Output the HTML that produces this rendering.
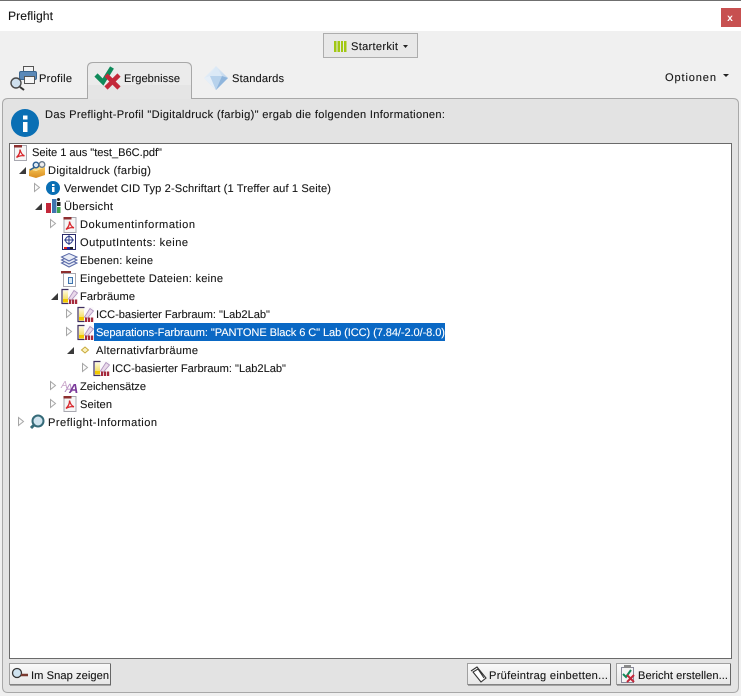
<!DOCTYPE html>
<html><head><meta charset="utf-8"><title>Preflight</title>
<style>
html,body{margin:0;padding:0;background:#f0f0f0;width:741px;height:696px;overflow:hidden}
svg{display:block}
text{font-family:"Liberation Sans",sans-serif;font-size:11.1px;fill:#161616;stroke:#161616;stroke-width:.1;text-rendering:geometricPrecision}
</style></head><body>
<svg width="741" height="696" viewBox="0 0 741 696" xmlns="http://www.w3.org/2000/svg">
<defs>
<linearGradient id="btn" x1="0" y1="0" x2="0" y2="1"><stop offset="0" stop-color="#fafafa"/><stop offset="1" stop-color="#e6e6e6"/></linearGradient>
<linearGradient id="dia" x1="0" y1="0" x2="1" y2="1"><stop offset="0" stop-color="#f4f8fc"/><stop offset="1" stop-color="#a9c7e6"/></linearGradient>
<linearGradient id="sw" x1="0" y1="0" x2="0" y2="1"><stop offset="0" stop-color="#fdf8dc"/><stop offset="1" stop-color="#f5e06a"/></linearGradient>
<linearGradient id="box" x1="0" y1="0" x2="0" y2="1"><stop offset="0" stop-color="#f7c85a"/><stop offset="1" stop-color="#d98c1e"/></linearGradient>
<g id="pdf"><path d="M1.500 .5H13.500V15.500H1.500Z" fill="#f6f6f6" stroke="#a8a8b0"/><rect x="1" y="0" width="8" height="2.500" fill="#8e2f2f"/><path d="M3.500 12.500C6 10 7.200 7 7 4.500C7.700 7.500 9 10 11.500 10.800C8.800 10.300 5.800 11 3.500 12.500Z" fill="none" stroke="#d8262c" stroke-width="1.300"/></g>
<g id="farb"><rect x="1" y="1" width="16" height="15" fill="#fbf9fb"/><path d="M1.500 16V1.500H8" fill="none" stroke="#3f2f60" stroke-width="1.200"/><path d="M1 15.500H8" stroke="#3f2f60" stroke-width="1.200"/><rect x="2.500" y="2.500" width="5" height="8.500" fill="url(#sw)"/><rect x="2.500" y="11" width="5" height="3.500" fill="#f2c800"/><path d="M8 11L13.500 2.500L17 5L10.500 12.500Z" fill="#ead9ea" stroke="#b096c0" stroke-width=".9"/><rect x="8.500" y="11.500" width="2.200" height="4.500" fill="#a52a3c"/><rect x="11.500" y="11.500" width="2.200" height="4.500" fill="#a52a3c"/><rect x="14.500" y="11.500" width="2.200" height="4.500" fill="#a52a3c"/></g>
<path id="tri" d="M.5 .5L5.500 4.500L.5 8.500Z" fill="#fafafa" stroke="#a6a6a6"/>
<path id="open" d="M7 0V7H0Z" fill="#3a3a3a"/>
</defs>

<!-- title bar -->
<rect x="0" y="0" width="741" height="31" fill="#fff"/>
<rect x="0" y="0" width="741" height="1" fill="#6f6f6f"/>
<text x="8" y="20" style="font-size:12.2px" textLength="45">Preflight</text>
<rect x="721" y="8" width="20" height="19" fill="#c75050"/>
<text x="727" y="21" style="font-size:10px;font-weight:bold;fill:#fff;stroke:none;font-family:'Liberation Mono',monospace">x</text>

<!-- Starterkit -->
<rect x="323.500" y="33.500" width="94" height="24" fill="#e8e8e8" stroke="#adadad"/>
<g fill="#a2c814"><rect x="334" y="41" width="2.500" height="11"/><rect x="337.500" y="41" width="2.500" height="11"/><rect x="341" y="41" width="2" height="11"/><rect x="344" y="41" width="2.500" height="11"/></g>
<text x="351" y="50" textLength="47">Starterkit</text>
<path d="M403 45H408L405.500 48Z" fill="#222"/>

<!-- panel -->
<path d="M2.500 104Q2.500 98.500 8 98.500H87.500V68Q87.500 62.500 93 62.500H186Q191.500 62.500 191.500 68V98.500H733Q738.500 98.500 738.500 104V687Q738.500 692.500 733 692.500H8Q2.500 692.500 2.500 687Z" fill="#e3e3e3" stroke="#a8a8a8"/>
<path d="M88 68Q89 63 94 63H185Q190 63 191 68V85H88Z" fill="#ebebeb"/>
<rect x="88" y="85" width="103" height="14" fill="#e5e5e5"/>

<!-- tab: Profile -->
<g>
<rect x="23.500" y="66.500" width="10" height="6" fill="#f4f4f4" stroke="#555"/>
<rect x="19.500" y="71.500" width="17" height="8" rx="1.500" fill="#5b89b8" stroke="#3a6690"/>
<rect x="24.500" y="76.500" width="10" height="7" fill="#f6f6f6" stroke="#555"/>
<circle cx="16" cy="83" r="5" fill="#cfe0ee" stroke="#4a4a4a" stroke-width="1.400"/>
<path d="M20 87L24 90" stroke="#333" stroke-width="2"/>
</g>
<text x="39" y="82" textLength="33">Profile</text>

<!-- tab: Ergebnisse -->
<path d="M96 75L103 82L112 67.500" fill="none" stroke="#0f8a5a" stroke-width="4.500"/>
<path d="M106 75L119 88M119 75L106 88" fill="none" stroke="#c3283a" stroke-width="4.500"/>
<text x="124" y="82" textLength="56">Ergebnisse</text>

<!-- tab: Standards -->
<path d="M216 66L228 78L216 90L204 78Z" fill="url(#dia)"/>
<path d="M216 66L210 76H222Z" fill="#dbe9f6"/>
<path d="M204 78L210 76L216 90Z" fill="#e6eff8"/>
<path d="M210 76H222L216 90Z" fill="#b7d2ec"/>
<path d="M228 78L222 76L216 90Z" fill="#8fb5dc"/>
<text x="232" y="82" textLength="52">Standards</text>

<text x="665" y="81" textLength="51">Optionen</text>
<path d="M723 74H729L726 77Z" fill="#222"/>

<!-- info line -->
<circle cx="25" cy="123" r="14" fill="#0a6fb4"/>
<rect x="23" y="115.500" width="4.500" height="4" fill="#fff"/>
<rect x="23" y="122" width="4.500" height="10" fill="#fff"/>
<text x="45" y="118" textLength="400">Das Preflight-Profil "Digitaldruck (farbig)" ergab die folgenden Informationen:</text>

<!-- tree -->
<rect x="9.500" y="143.500" width="722" height="515" fill="#fff" stroke="#6a6a6a"/>
<rect x="94" y="323" width="351" height="18" fill="#0a68c4"/>

<use href="#pdf" x="13" y="145"/>
<text x="32" y="156" textLength="130">Seite 1 aus "test_B6C.pdf"</text>

<use href="#open" x="19" y="167"/>
<path d="M29 169L36 171L45 167V175L36 178L29 176Z" fill="url(#box)"/><path d="M29 169L38 166L45 167L36 171Z" fill="#f9dc8a"/>
<circle cx="36" cy="165" r="2.800" fill="#dbe8f3" stroke="#2a5f92" stroke-width="1.400"/><circle cx="42" cy="164.500" r="2.800" fill="#eee" stroke="#6a7a8a" stroke-width="1.300"/><path d="M30 170L35 167" stroke="#2a5f92" stroke-width="1.600"/>
<text x="48" y="174" textLength="103">Digitaldruck (farbig)</text>

<use href="#tri" x="34" y="183"/>
<circle cx="53" cy="188" r="7" fill="#0a6fb4"/><rect x="52" y="184" width="2.500" height="2" fill="#fff"/><rect x="52" y="187" width="2.500" height="5" fill="#fff"/>
<text x="64" y="192" textLength="267">Verwendet CID Typ 2-Schriftart (1 Treffer auf 1 Seite)</text>

<use href="#open" x="35" y="203"/>
<rect x="46" y="203" width="5" height="10" fill="#c3283a"/><rect x="52" y="199" width="4.500" height="14" fill="#3f74ae"/><rect x="57" y="207" width="3.500" height="6" fill="#3fa34d"/><circle cx="58.500" cy="199.500" r="1.500" fill="#222"/><rect x="57" y="202" width="3.500" height="4" fill="#222"/>
<text x="64" y="210" textLength="49">Übersicht</text>

<use href="#tri" x="50" y="219"/>
<use href="#pdf" x="62.500" y="217"/>
<text x="80" y="228" textLength="115">Dokumentinformation</text>

<rect x="62.500" y="234.500" width="13" height="15" fill="#fff" stroke="#2a2a6a"/>
<circle cx="69" cy="240" r="3.500" fill="none" stroke="#2a3a8a"/><path d="M69 235V245M64 240H74" stroke="#2a3a8a"/>
<rect x="64" y="247" width="3" height="2" fill="#d22"/><rect x="67" y="247" width="3" height="2" fill="#22a"/><rect x="70" y="247" width="3" height="2" fill="#222"/>
<text x="80" y="246" textLength="108">OutputIntents: keine</text>

<g fill="#e9edf7" stroke="#5a6aa8"><path d="M61.500 263L69 259.500L77 263L69 267Z"/><path d="M61.500 260L69 256.500L77 260L69 264Z"/><path d="M61.500 257L69 253.500L77 257L69 261Z"/></g>
<text x="80" y="264" textLength="73">Ebenen: keine</text>

<rect x="61" y="271" width="10" height="2.500" fill="#8e2f2f"/><path d="M63.500 273.500H75.500V286.500H63.500Z" fill="#fff" stroke="#a8a8b0"/><path d="M68.500 277.500H72.500V283.500H68.500Z" fill="#dcebf7" stroke="#3f74ae"/>
<text x="80" y="282" textLength="143">Eingebettete Dateien: keine</text>

<use href="#open" x="51" y="293"/>
<use href="#farb" x="60.500" y="288"/>
<text x="80" y="300" textLength="55">Farbräume</text>

<use href="#tri" x="66" y="309"/>
<use href="#farb" x="76.500" y="306"/>
<text x="96" y="318" textLength="174">ICC-basierter Farbraum: "Lab2Lab"</text>

<use href="#tri" x="66" y="327"/>
<use href="#farb" x="76.500" y="324"/>
<text x="96" y="336" textLength="349" style="fill:#fff;stroke:#fff">Separations-Farbraum: "PANTONE Black 6 C" Lab (ICC) (7.84/-2.0/-8.0)</text>

<use href="#open" x="67" y="347"/>
<path d="M85 347L88.500 350L85 353L81.500 350Z" fill="#fbf3c0" stroke="#c8a93a"/>
<text x="96" y="354" textLength="102">Alternativfarbräume</text>

<use href="#tri" x="82" y="363"/>
<use href="#farb" x="92.500" y="360"/>
<text x="112" y="372" textLength="174">ICC-basierter Farbraum: "Lab2Lab"</text>

<use href="#tri" x="50" y="381"/>
<text x="61" y="388" style="font-size:10px;font-style:italic;fill:#c8a4c8;stroke:none">A</text><text x="65" y="392" style="font-size:12px;font-style:italic;fill:#b48cc0;stroke:none">A</text><text x="69" y="393" style="font-size:13px;font-style:italic;font-weight:bold;fill:#7a3a9a;stroke:none">A</text>
<text x="80" y="390" textLength="66">Zeichensätze</text>

<use href="#tri" x="50" y="399"/>
<use href="#pdf" x="62.500" y="396"/>
<text x="80" y="408" textLength="32">Seiten</text>

<use href="#tri" x="18" y="417"/>
<circle cx="38" cy="421" r="5.500" fill="#cfe3ee" stroke="#356a78" stroke-width="2"/><path d="M34 425L31 428" stroke="#356a78" stroke-width="3"/>
<text x="48" y="426" textLength="109">Preflight-Information</text>

<!-- buttons -->
<rect x="9.500" y="663.500" width="101" height="21" fill="url(#btn)" stroke="#a0a0a0"/>
<path d="M110.500 664V685H10" fill="none" stroke="#666"/>
<circle cx="17" cy="673" r="4.500" fill="#cfe3f0" stroke="#333" stroke-width="1.300"/><path d="M21 675H28" stroke="#7a3a30" stroke-width="2.500"/>
<text x="31" y="679" textLength="78">Im Snap zeigen</text>

<rect x="467.500" y="663.500" width="143" height="21" fill="url(#btn)" stroke="#a0a0a0"/>
<path d="M610.500 664V685H468" fill="none" stroke="#666"/>
<path d="M471 671L477 667L486 678L481 682L473 672L478 669L484 678" fill="#fff" stroke="#333" stroke-width="1.100"/>
<text x="489" y="679" textLength="119">Prüfeintrag einbetten...</text>

<rect x="616.500" y="663.500" width="114" height="21" fill="url(#btn)" stroke="#a0a0a0"/>
<path d="M730.500 664V685H617" fill="none" stroke="#666"/>
<rect x="621.500" y="667.500" width="12" height="15" fill="#f4f4f4" stroke="#889"/><rect x="624" y="665" width="7" height="3" fill="#8a8a8a"/>
<path d="M623 674L626 677L631 670" fill="none" stroke="#0f8a5a" stroke-width="2"/><path d="M627 675L634 682M634 675L627 682" stroke="#c3283a" stroke-width="2"/>
<text x="638" y="679" textLength="90">Bericht erstellen...</text>
</svg>
</body></html>
